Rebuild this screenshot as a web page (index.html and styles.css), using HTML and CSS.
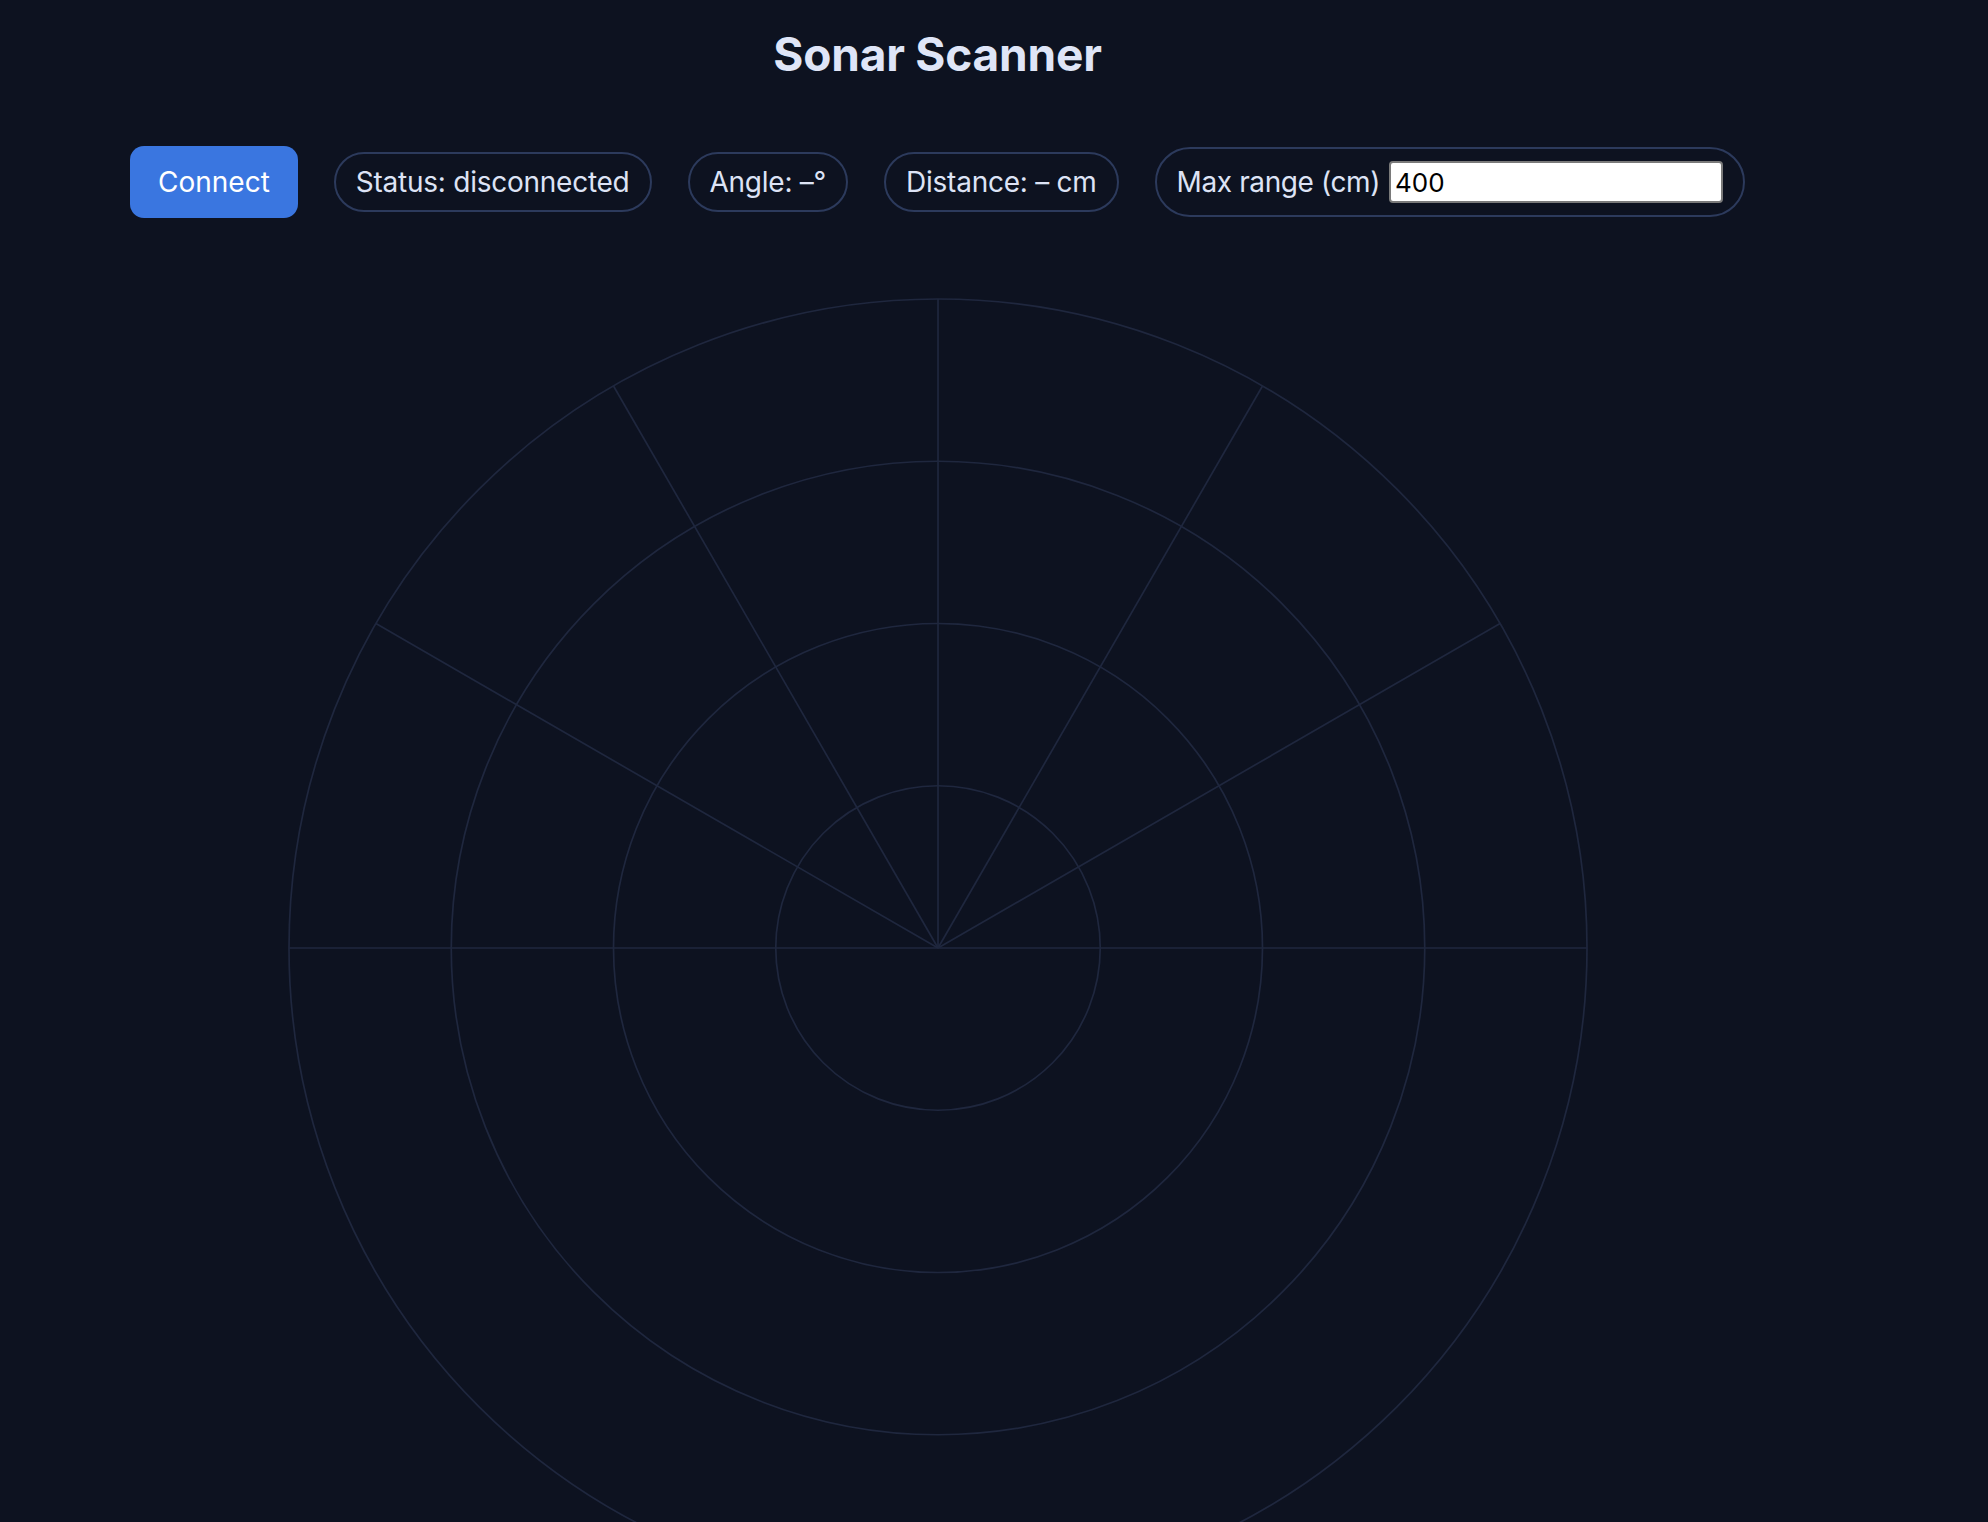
FILE: index.html
```html
<!DOCTYPE html>
<html lang="en">
<head>
<meta charset="utf-8">
<title>Sonar Scanner</title>
<link rel="stylesheet" href="styles.css">
</head>
<body>
<main class="app">
  <h1 class="title">Sonar Scanner</h1>
  <div class="controls">
    <button class="btn-connect" type="button">Connect</button>
    <span class="pill">Status: disconnected</span>
    <span class="pill">Angle: –°</span>
    <span class="pill">Distance: – cm</span>
    <label class="pill pill-range"><span class="range-label">Max range (cm)</span><input class="range-input" type="number" value="400"></label>
  </div>
  <svg class="radar" width="1300" height="1300" viewBox="0 0 1300 1300" xmlns="http://www.w3.org/2000/svg">
    <g fill="none" stroke="#1f273e" stroke-width="1.7">
      <circle cx="650" cy="650" r="162.25"/>
      <circle cx="650" cy="650" r="324.5"/>
      <circle cx="650" cy="650" r="486.75"/>
      <circle cx="650" cy="650" r="649"/>
      <line x1="1" y1="650" x2="1299" y2="650"/>
      <line x1="650" y1="650" x2="1212.05" y2="325.5"/>
      <line x1="650" y1="650" x2="974.5" y2="87.95"/>
      <line x1="650" y1="650" x2="650" y2="1"/>
      <line x1="650" y1="650" x2="325.5" y2="87.95"/>
      <line x1="650" y1="650" x2="87.95" y2="325.5"/>
    </g>
  </svg>
</main>
</body>
</html>
```

FILE: styles.css
```css
html, body {
  margin: 0;
  padding: 0;
  background: #0d1220;
  overflow: hidden;
}

body {
  font-family: Inter, "Noto Sans", "Liberation Sans", sans-serif;
  color: #dde3f5;
}

.app {
  width: 1875px;
  display: flex;
  flex-direction: column;
  align-items: center;
}

.title {
  margin: 26px 0 0;
  font-size: 46px;
  font-weight: 700;
  line-height: 56px;
  color: #dfe5f7;
  letter-spacing: -0.2px;
}

.controls {
  margin-top: 64px;
  display: flex;
  align-items: center;
  gap: 36px;
}

.btn-connect {
  height: 72px;
  padding: 0 28px;
  border: none;
  border-radius: 14px;
  background: #3a76e0;
  color: #ffffff;
  font-family: inherit;
  font-size: 28px;
  line-height: 34px;
}

.pill {
  border: 2px solid #2c3a5c;
  border-radius: 999px;
  padding: 11px 20px;
  font-size: 28px;
  line-height: 34px;
  color: #dde3f5;
  white-space: nowrap;
  letter-spacing: -0.25px;
}

.pill-range {
  display: flex;
  align-items: center;
  gap: 9px;
  padding: 12px 20px;
}

.range-label {
  letter-spacing: -0.4px;
}

.range-input {
  box-sizing: border-box;
  width: 334px;
  height: 42px;
  margin: 0;
  border: 2px solid #7a7a7a;
  border-radius: 4px;
  padding: 0 4px;
  background: #ffffff;
  color: #000000;
  font-family: Inter, "Liberation Sans", sans-serif;
  font-size: 26px;
  letter-spacing: 0;
  appearance: textfield;
  -moz-appearance: textfield;
}

.range-input::-webkit-outer-spin-button,
.range-input::-webkit-inner-spin-button {
  -webkit-appearance: none;
  margin: 0;
}

.radar {
  display: block;
  margin-top: 80px;
}
```
